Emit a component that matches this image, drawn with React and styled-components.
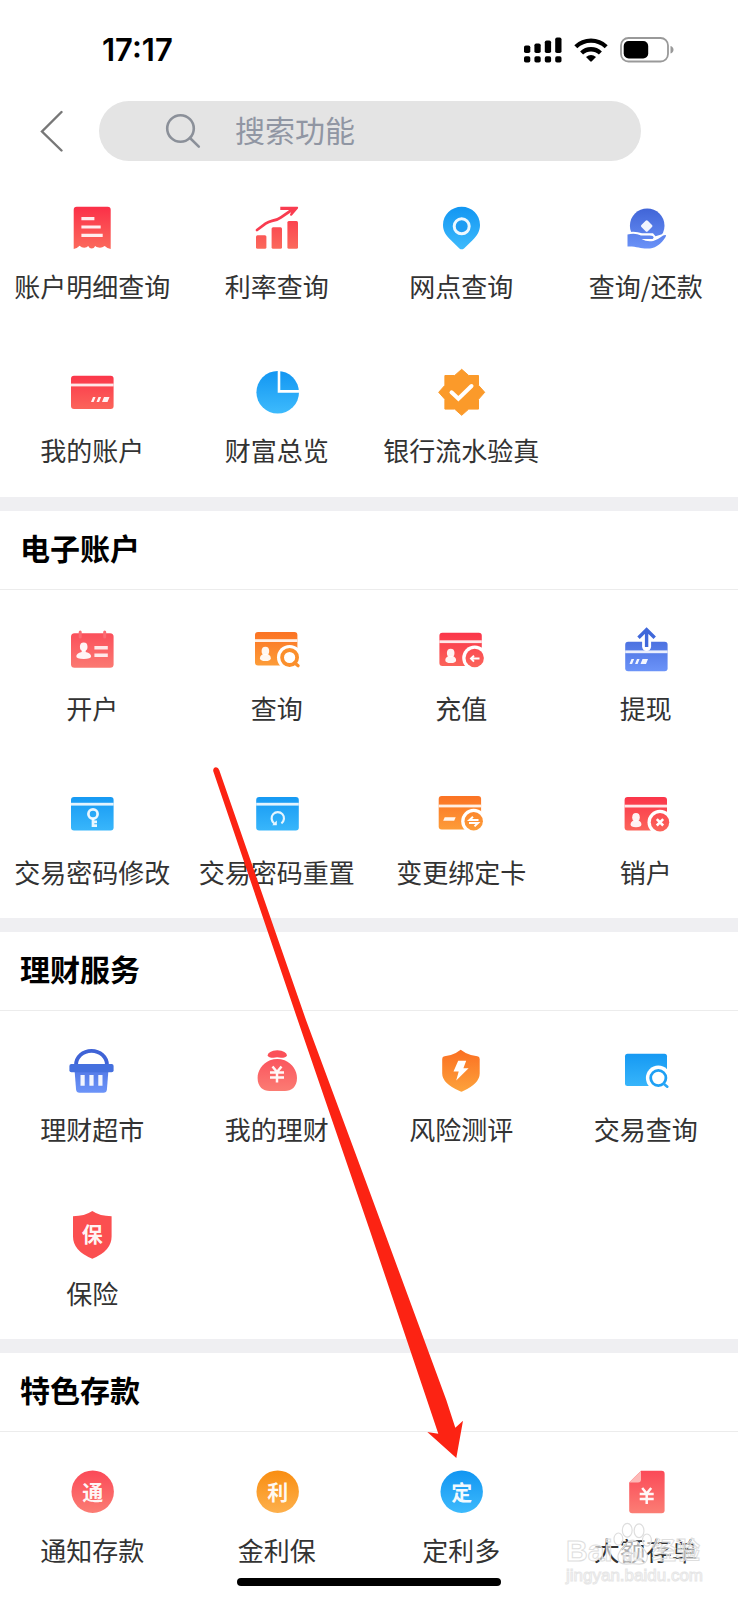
import React from "react";
import styled, { createGlobalStyle } from "styled-components";

const GlobalStyle = createGlobalStyle`
  *, *::before, *::after { box-sizing: border-box; }
  body {
    margin: 0;
    background: #fff;
    color: #333;
    font-family: "Noto Sans CJK SC", "Liberation Sans", sans-serif;
  }
  button, input { font: inherit; color: inherit; }
`;

const Page = styled.div`
  position: relative;
  min-height: 100vh;
  overflow: hidden;
  background: #fff;
`;

const StatusBar = styled.header`
  display: flex;
  align-items: center;
  justify-content: space-between;
  height: 101px;
  padding: 0 64px 2px 102px;
`;

const Clock = styled.time`
  font-family: Inter, "Liberation Sans", sans-serif;
  font-size: 31px;
  font-weight: 600;
  line-height: 36px;
  color: #000;
`;

const StatusIcons = styled.div`
  display: flex;
  align-items: center;
  gap: 12px;
`;

const SearchRow = styled.form`
  display: flex;
  align-items: center;
  padding: 0 97px 7px 0;
`;

const BackButton = styled.button`
  display: flex;
  flex: none;
  width: 99px;
  padding: 0 0 0 40px;
  border: 0;
  background: none;
`;

const SearchField = styled.label`
  display: flex;
  flex: 1;
  align-items: center;
  gap: 34px;
  height: 60px;
  padding: 0 40px 0 66px;
  border-radius: 30px;
  background: #e4e4e4;
`;

const SearchInput = styled.input`
  flex: 1;
  min-width: 0;
  height: 48px;
  padding: 0 0 4px;
  border: 0;
  outline: 0;
  background: transparent;
  font-size: 30px;
  line-height: 44px;
  &::placeholder { color: #9096a3; opacity: 1; }
`;

const Section = styled.section`
  border-top: ${(p) => (p.$divided ? "14px solid #efeff2" : "0")};
  padding-bottom: ${(p) => (p.$divided ? "0" : "1px")};
`;

const SectionTitle = styled.h2`
  margin: 0;
  padding: 14px 20px 20px;
  border-bottom: 1px solid #ececec;
  font-size: 30px;
  font-weight: 700;
  line-height: 44px;
  color: #000;
`;

const Grid = styled.div`
  display: grid;
  grid-template-columns: repeat(4, 1fr);
`;

const Tile = styled.button`
  display: flex;
  flex-direction: column;
  align-items: center;
  gap: 18px;
  height: 164px;
  padding: 36px 0 0;
  border: 0;
  background: none;
`;

const TileLabel = styled.span`
  font-size: 26px;
  line-height: 32px;
  white-space: nowrap;
`;

const TileSvg = styled.svg`
  display: block;
  width: 48px;
  height: 48px;
  overflow: visible;
`;

const Arrow = styled.svg`
  position: absolute;
  top: 764px;
  left: 210px;
  pointer-events: none;
`;

const HomeBar = styled.div`
  position: fixed;
  bottom: 14px;
  left: 50%;
  width: 264px;
  height: 8px;
  margin-left: -132px;
  border-radius: 4px;
  background: #000;
`;

const Watermark = styled.div`
  position: absolute;
  right: 38px;
  bottom: 14px;
  width: 134px;
  pointer-events: none;
  white-space: nowrap;
  font-family: "Liberation Sans", "Noto Sans CJK SC", sans-serif;
  color: rgba(255, 255, 255, 0.6);
  -webkit-text-stroke: 1px #dedede;
`;

const WatermarkLogo = styled.div`
  display: flex;
  align-items: flex-end;
  height: 46px;
  font-size: 30px;
  font-weight: 700;
  line-height: 30px;
`;

const WatermarkName = styled.span`
  font-size: 24px;
  line-height: 30px;
`;

const WatermarkUrl = styled.div`
  font-size: 17px;
  line-height: 20px;
  -webkit-text-stroke: 1px #e6e6e6;
`;

const GRADIENTS = {
  red: ["#fb3048", "#fb6a5c"],
  coral: ["#fb4a58", "#fb7d74"],
  blue: ["#1296f2", "#3dbafc"],
  indigo: ["#3f63d6", "#6b93f8"],
  orange: ["#fb6f22", "#fda33c"],
  amber: ["#f98e12", "#fdb04c"],
};

const Defs = () => (
  <svg width="0" height="0" style={{ position: "absolute" }} aria-hidden="true">
    <defs>
      {Object.entries(GRADIENTS).map(([name, [from, to]]) => (
        <linearGradient key={name} id={name} x1="0" y1="3" x2="0" y2="45" gradientUnits="userSpaceOnUse">
          <stop offset="0" stopColor={from} />
          <stop offset="1" stopColor={to} />
        </linearGradient>
      ))}
    </defs>
  </svg>
);

const Person = ({ x, y, wide }) => (
  <g fill="#fff" fillOpacity="0.93">
    <ellipse cx={x} cy={y} rx="3.8" ry="4.3" />
    <path
      d={
        wide
          ? `M${x - 2} ${y + 3}h4v2.2q5.400 1.300 5.400 4.400 0 2.700-7.400 2.700t-7.400-2.700q0-3.100 5.400-4.400z`
          : `M${x - 2} ${y + 3}h4q3.400 1.200 3.400 4.200 0 2.800-5.400 2.800t-5.400-2.800q0-3 3.400-4.200z`
      }
    />
  </g>
);

const Card = ({ x, y, w = 42.4, h = 33.4, line, fill }) => (
  <>
    <rect x={x} y={y} width={w} height={h} rx="3" fill={`url(#${fill})`} />
    <rect x={x} y={line} width={w} height="2.8" fill="#fff" fillOpacity="0.88" />
  </>
);

const Hatch = ({ x, y }) => (
  <path
    d={`M${x + 2} ${y}h2.600l-2 5h-2.600zM${x + 7.500} ${y}h2.600l-2 5h-2.600zM${x + 13} ${y}h5.500l-2 5h-5.500z`}
    fill="#fff"
    fillOpacity="0.92"
  />
);

const Glyph = ({ y = 31.5, size = 21, x = 24.7, children }) => (
  <text
    x={x}
    y={y}
    textAnchor="middle"
    fontSize={size}
    fontWeight="700"
    fontFamily='"Noto Sans CJK SC", sans-serif'
    fill="#fff"
    fillOpacity="0.95"
  >
    {children}
  </text>
);

const Yuan = ({ x, y }) => (
  <path
    d={`M${x - 4.500} ${y - 7.500}l4.500 5.500 4.500-5.500M${x - 7} ${y - 1.500}h14M${x - 7} ${y + 3.500}h14M${x} ${y - 2}v10.500`}
    fill="none"
    stroke="#fff"
    strokeOpacity="0.95"
    strokeWidth="2.500"
  />
);

const Disc = ({ fill, children }) => (
  <>
    <circle cx="24.700" cy="23.700" r="21.200" fill={`url(#${fill})`} />
    <Glyph>{children}</Glyph>
  </>
);

const Badge = ({ x, y, fill, children }) => (
  <>
    <circle cx={x} cy={y} r="12.500" fill="#fff" />
    <circle cx={x} cy={y} r="9.200" fill={`url(#${fill})`} />
    <g stroke="#fff" strokeWidth="2" fill="none">{children}</g>
  </>
);

const ICONS = {
  receipt: (
    <>
      <path d="M8.700 2.700h31q3 0 3 3V45q-3.200-.3-6-3-3 2.200-6 1.600-2.600-.4-3.500-1.600-1.300 2.600-3.500 2.600t-3.500-2.600q-1.300 1.800-4 1.800-2.600 0-4.600-2-2.500 2.700-5.900 3.200V5.700q0-3 3-3z" fill="url(#red)" />
      <path d="M13.400 14.700h13M13.400 23h19.300M13.400 31.300h21.300" stroke="#fff" strokeOpacity=".9" strokeWidth="3.200" />
    </>
  ),
  rate: (
    <>
      <rect x="3" y="31.300" width="10.400" height="13.400" rx="1.500" fill="url(#red)" />
      <rect x="18.600" y="23.300" width="10.400" height="21.400" rx="1.500" fill="url(#red)" />
      <rect x="34.400" y="17" width="10.600" height="27.700" rx="1.500" fill="url(#red)" />
      <path d="M4 26l8.500-6.300q3-2.100 6.500-2.800 5.500-1 9-3.600L38 6.500" fill="none" stroke="#f93c50" strokeWidth="2.800" strokeLinecap="round" />
      <path d="M27.300 2.800h17.300q1 .6.300 1.700l-6 7q-1.300.8-2-.4l2-5.100H27.300z" fill="#f93c50" />
    </>
  ),
  pin: (
    <>
      <path d="M24.700 2.700c10.300 0 18.300 8 18.300 18.300 0 6.300-2.800 10.400-7.500 15.200l-8.500 8.200q-2.300 1.800-4.600 0L14 36.200C9 31.400 6 27.300 6 21 6 10.700 14.400 2.700 24.700 2.700z" fill="url(#blue)" />
      <circle cx="24.700" cy="22.300" r="7.500" fill="#1f9cf2" stroke="#fff" strokeOpacity=".92" strokeWidth="3" />
    </>
  ),
  repay: (
    <>
      <circle cx="25.200" cy="21.700" r="17.300" fill="url(#indigo)" />
      <rect x="20.200" y="17.500" width="9" height="9" rx="1.500" fill="#fff" fillOpacity=".92" transform="rotate(45 24.700 22)" />
      <path d="M4 28.500Q13 26.500 20 29.300H31l2.500 3L44 29l2 4-9 10-12 3.500L4 44z" fill="#fff" />
      <path d="M5.500 30.600q7.500-1.800 13.500.8h8.800q3.700 0 3.900 2.200l-1 1.400H19.500q5.500 3.300 11.800 2 4.200-1.200 7.300-3.800 3-2.400 5-2.200 1 .5-.2 2.200c-4 6-8.400 10.300-15.400 11.200-8.200 1-12.500-2.200-22.500-1.800z" fill="url(#indigo)" />
    </>
  ),
  card: (
    <>
      <Card x={3} y={7.700} w={42.600} line={15.600} fill="red" />
      <Hatch x={23} y={29} />
    </>
  ),
  pie: (
    <>
      <circle cx="24.700" cy="24.300" r="21.300" fill="url(#blue)" />
      <path d="M26 2v21.400h22" fill="none" stroke="#fff" strokeWidth="2.600" />
    </>
  ),
  verify: (
    <>
      <path d="M24.700 1.300l7 6.200h9.800v9.800l6.200 7-6.200 7v9.800h-9.800l-7 6.200-7-6.200H7.900v-9.800l-6.200-7 6.200-7V7.500h9.800z" fill="#fb9a2a" stroke="#fb9a2a" strokeLinejoin="round" />
      <path d="M14.500 24.300l6.900 6.500L34.500 18" fill="none" stroke="#fff" strokeWidth="4" strokeLinecap="round" />
    </>
  ),
  open: (
    <>
      <rect x="3" y="7.300" width="42.600" height="34.400" rx="3.500" fill="url(#coral)" />
      <path d="M12.200 6v5M36.700 6v5" stroke="#fb6b72" strokeWidth="3" strokeLinecap="round" />
      <Person x={15.700} y={20.700} wide />
      <path d="M26.400 21.700h13.400M26.400 29.300h13.400" stroke="#fff" strokeOpacity=".85" strokeWidth="3.600" />
    </>
  ),
  query: (
    <>
      <Card x={2} y={6} line={13.200} fill="orange" />
      <Person x={12.400} y={25} />
      <circle cx="36.600" cy="31.500" r="12.600" fill="#fff" />
      <circle cx="36.600" cy="31.500" r="7.500" fill="none" stroke="#fb8f2c" strokeWidth="3.800" />
      <path d="M41.500 36.800l3.600 3" stroke="#fb8f2c" strokeWidth="3.200" strokeLinecap="round" />
    </>
  ),
  recharge: (
    <>
      <Card x={2.400} y={6.700} line={14.300} fill="red" />
      <Person x={13.700} y={27} />
      <Badge x={37.700} y={32} fill="red">
        <path d="M34 32.600h8.500M37 29.600l-3 3 3 3" />
      </Badge>
    </>
  ),
  withdraw: (
    <>
      <Card x={3.200} y={15.700} h={29.500} line={24.400} fill="indigo" />
      <Hatch x={7.500} y={33} />
      <path d="M24.600 6v14.500" stroke="#fff" strokeWidth="9" strokeLinecap="round" />
      <path d="M24.600 4v17M16.500 11.800l8.100-8.100 8.100 8.100" fill="none" stroke="#4068da" strokeWidth="3.400" />
    </>
  ),
  key: (
    <>
      <Card x={3} y={7} w={42.600} line={12.800} fill="blue" />
      <g fill="none" stroke="#fff" strokeOpacity=".9" strokeWidth="2.700">
        <circle cx="25" cy="24" r="4.600" />
        <path d="M25 28.600v8.400M25 31.800h4M25 35.600h4" />
      </g>
    </>
  ),
  reset: (
    <>
      <Card x={3.200} y={7} w={42.600} line={12.800} fill="blue" />
      <path d="M28.400 33.300a6.200 6.200 0 1 0-7.200 0" fill="none" stroke="#fff" strokeOpacity=".88" strokeWidth="2.200" />
      <path d="M19.200 35.200h4.600v-4.800z" fill="#fff" fillOpacity=".9" />
    </>
  ),
  change: (
    <>
      <Card x={1.700} y={6} line={14.600} fill="orange" />
      <path d="M7.700 27.300h11l-1.500 3.400h-11z" fill="#fff" fillOpacity=".92" />
      <Badge x={36.700} y={31.300} fill="orange">
        <path d="M41.500 30H32.500l3.500-3.300M32 33h9l-3.500 3.400" />
      </Badge>
    </>
  ),
  close: (
    <>
      <Card x={2.600} y={7} line={14.700} fill="red" />
      <Person x={14} y={27.300} />
      <Badge x={38} y={32.300} fill="red">
        <path d="M34.800 29.100l6.400 6.400M41.200 29.100l-6.400 6.400" strokeWidth="2.600" />
      </Badge>
    </>
  ),
  basket: (
    <>
      <path d="M8 18a15.500 14.200 0 0 1 31 0" fill="none" stroke="#3f63d6" strokeWidth="3.800" />
      <path d="M6.700 25h33.600l-1.400 17.700q-.4 3-3.400 3h-24q-3 0-3.400-3z" fill="url(#indigo)" />
      <rect x="1.400" y="17" width="44.200" height="8.300" rx="2" fill="#4570de" />
      <path d="M14.600 28v10.700M23.500 28v10.700M32.400 28v10.700" stroke="#fff" strokeOpacity=".92" strokeWidth="4.200" />
    </>
  ),
  bag: (
    <>
      <path d="M14.500 8.500q.6-4.500 9.800-5.200 9.300.7 9.700 5.200-1 2.300-6 2.300-4-1-7.500 0-5 0-6-2.300z" fill="#fb5058" />
      <path d="M17 13.300q7.300-2.600 14.600 0C39.700 16.600 44 24 44 31c0 9-5.700 13-12 13H16.600c-6.300 0-12-4-12-13 0-7 4.300-14.400 12.400-17.700z" fill="url(#coral)" />
      <Yuan x={24} y={27} />
    </>
  ),
  risk: (
    <>
      <path d="M23.700 2.700l5 3.400q5.500 2.800 11.600 3.200 2.400.2 2.400 2.700V26.500q0 10-17 17.800-1.300.7-2.600 0-17.900-7.800-17.900-17.800V12q0-2.500 2.400-2.700 6-.4 11.200-3.200z" fill="url(#orange)" />
      <path d="M21.200 13.700h8l-2.800 7.600h5.200L19.200 33.500l2.500-9h-5.200z" fill="#fff" />
    </>
  ),
  trade: (
    <>
      <rect x="3" y="6.700" width="42" height="32.300" rx="2.500" fill="url(#blue)" />
      <circle cx="36.300" cy="31" r="12.400" fill="#fff" />
      <circle cx="36.300" cy="31" r="7.600" fill="none" stroke="#1fa0f4" strokeWidth="2.800" />
      <path d="M42 37l3.300 2.700" stroke="#2aa8f8" strokeWidth="2.600" strokeLinecap="round" />
    </>
  ),
  insurance: (
    <>
      <path d="M24.300 0q7.600 5.200 19.300 5.200V25.500q0 14.500-19.300 22.200Q5 40 5 25.500V5.200Q16.700 5.200 24.300 0z" fill="#fb4f50" />
      <Glyph x={24.300} y={30.500}>保</Glyph>
    </>
  ),
  notice: <Disc fill="coral">通</Disc>,
  profit: <Disc fill="amber">利</Disc>,
  fixed: <Disc fill="blue">定</Disc>,
  certificate: (
    <>
      <path d="M19 2.700h20.600q3 0 3 3V42.300q0 3-3 3H10.200q-3 0-3-3V14.500z" fill="url(#coral)" />
      <path d="M19 2.700v8.800q0 3-3 3H7.200z" fill="#fdb8b6" />
      <Yuan x={24.700} y={27.500} />
    </>
  ),
};

const SECTIONS = [
  {
    items: [
      ["receipt", "账户明细查询"],
      ["rate", "利率查询"],
      ["pin", "网点查询"],
      ["repay", "查询/还款"],
      ["card", "我的账户"],
      ["pie", "财富总览"],
      ["verify", "银行流水验真"],
    ],
  },
  {
    title: "电子账户",
    items: [
      ["open", "开户"],
      ["query", "查询"],
      ["recharge", "充值"],
      ["withdraw", "提现"],
      ["key", "交易密码修改"],
      ["reset", "交易密码重置"],
      ["change", "变更绑定卡"],
      ["close", "销户"],
    ],
  },
  {
    title: "理财服务",
    items: [
      ["basket", "理财超市"],
      ["bag", "我的理财"],
      ["risk", "风险测评"],
      ["trade", "交易查询"],
      ["insurance", "保险"],
    ],
  },
  {
    title: "特色存款",
    items: [
      ["notice", "通知存款"],
      ["profit", "金利保"],
      ["fixed", "定利多"],
      ["certificate", "大额存单"],
    ],
  },
];

const Signal = () => (
  <svg width="38" height="26" viewBox="0 0 38 26" aria-hidden="true">
    {[8, 6, 3, 0].map((top, i) => (
      <g key={top}>
        <rect x={i * 10.400} y={top + 0.500} width="6.300" height={15.500 - top} rx="1.800" />
        <rect x={i * 10.400} y="19.300" width="6.300" height="6.300" rx="1.800" />
      </g>
    ))}
  </svg>
);

const Wifi = () => (
  <svg width="34" height="24" viewBox="0 0 34 24" aria-hidden="true">
    <path d="M1.800 8.700a22 22 0 0 1 30.400 0" fill="none" stroke="#000" strokeWidth="4.300" />
    <path d="M7.600 15a13.600 13.600 0 0 1 18.800 0" fill="none" stroke="#000" strokeWidth="4.300" />
    <path d="M12 19q5-4 10 0l-4.200 4.300q-.8.700-1.600 0z" />
  </svg>
);

const Battery = () => (
  <svg width="54" height="26" viewBox="0 0 54 26" aria-hidden="true">
    <rect x="1" y="1" width="47" height="23.500" rx="7.500" fill="none" stroke="#999" strokeWidth="1.800" />
    <rect x="3.700" y="4" width="24.500" height="17.500" rx="5" />
    <path d="M50.500 9q3 1 3 3.800t-3 3.800z" fill="#999" />
  </svg>
);

const Paw = () => (
  <svg width="40" height="44" viewBox="0 0 40 44" aria-hidden="true">
    <g fill="#fff" fillOpacity=".6" stroke="#dedede" strokeWidth="1.200">
      <ellipse cx="14.500" cy="8" rx="5" ry="7" />
      <ellipse cx="26.500" cy="8.500" rx="5" ry="7" />
      <ellipse cx="5.500" cy="17" rx="4.500" ry="6.200" />
      <ellipse cx="34.500" cy="18" rx="4.500" ry="6.200" />
      <path d="M20 18q5 0 8.500 6.500 6.500 5.500 6.500 10.500 0 8-9 7.500-6-1-12 0-9 .5-9-7.500 0-5 6.500-10.500Q15 18 20 18z" />
    </g>
    <text x="20" y="39" textAnchor="middle" fontSize="17" fontWeight="700" fill="#fff" fillOpacity=".6" stroke="#dedede" strokeWidth=".6">du</text>
  </svg>
);

export default function App() {
  return (
    <Page>
      <GlobalStyle />
      <Defs />
      <StatusBar>
        <Clock>17:17</Clock>
        <StatusIcons>
          <Signal />
          <Wifi />
          <Battery />
        </StatusIcons>
      </StatusBar>
      <SearchRow role="search">
        <BackButton type="button" aria-label="返回">
          <svg width="24" height="42" viewBox="0 0 24 42" fill="none" stroke="#777" strokeWidth="2.400" strokeLinecap="round" aria-hidden="true">
            <path d="M21.500 2L2 21.500 21.500 40.500" />
          </svg>
        </BackButton>
        <SearchField>
          <svg width="36" height="36" viewBox="0 0 36 36" fill="none" stroke="#8b9099" strokeWidth="2.600" strokeLinecap="round" aria-hidden="true">
            <circle cx="15.500" cy="15.500" r="13.300" />
            <path d="M25 25l8.800 8.600" />
          </svg>
          <SearchInput type="text" placeholder="搜索功能" aria-label="搜索功能" />
        </SearchField>
      </SearchRow>
      <main>
        {SECTIONS.map(({ title, items }) => (
          <Section key={title || "top"} $divided={Boolean(title)}>
            {title && <SectionTitle>{title}</SectionTitle>}
            <Grid>
              {items.map(([icon, label]) => (
                <Tile key={icon} type="button">
                  <TileSvg viewBox="0 0 48 48" aria-hidden="true">{ICONS[icon]}</TileSvg>
                  <TileLabel>{label}</TileLabel>
                </Tile>
              ))}
            </Grid>
          </Section>
        ))}
      </main>
      <Watermark aria-hidden="true">
        <WatermarkLogo>
          <span>Bai</span>
          <Paw />
          <WatermarkName>经验</WatermarkName>
        </WatermarkLogo>
        <WatermarkUrl>jingyan.baidu.com</WatermarkUrl>
      </Watermark>
      <Arrow width="260" height="700" viewBox="210 764 260 700" aria-hidden="true">
        <path
          d="M213.200 771Q213 767.500 216 767.300 218.300 767.300 219.200 770L306 1020 369 1190 446.300 1400 455.300 1427.700 463 1420.700 456.300 1458 427.300 1432 438.300 1433.700 426.300 1398 369 1228 297.700 1020z"
          fill="#fc2313"
        />
      </Arrow>
      <HomeBar />
    </Page>
  );
}
